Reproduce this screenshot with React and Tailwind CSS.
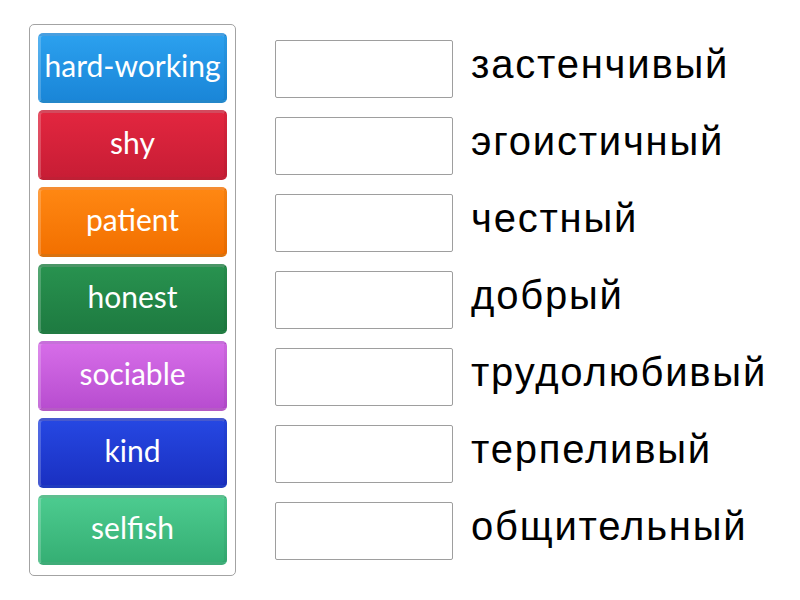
import React from 'react';

const tiles = [
  { label: 'hard-working', bg: 'bg-gradient-to-b from-[#2ba0ee] to-[#1a86d8]' },
  { label: 'shy', bg: 'bg-gradient-to-b from-[#e2263f] to-[#c81d35]' },
  { label: 'patient', bg: 'bg-gradient-to-b from-[#ff8712] to-[#f27000]' },
  { label: 'honest', bg: 'bg-gradient-to-b from-[#28924f] to-[#1e7b41]' },
  { label: 'sociable', bg: 'bg-gradient-to-b from-[#d66de8] to-[#b84dd0]' },
  { label: 'kind', bg: 'bg-gradient-to-b from-[#2647e2] to-[#1a30c2]' },
  { label: 'selfish', bg: 'bg-gradient-to-b from-[#4ccb8f] to-[#35af74]' },
];

const words = [
  'застенчивый',
  'эгоистичный',
  'честный',
  'добрый',
  'трудолюбивый',
  'терпеливый',
  'общительный',
];

const Tile = ({ label, bg }) => (
  <div
    className={`${bg} h-[70px] w-[189px] rounded-[5px] border-[3px] border-white/20 border-b-black/15 border-r-black/5 flex items-center justify-center text-white text-[30px] font-['Lato',sans-serif] leading-none pb-[7px] whitespace-nowrap`}
  >
    {label}
  </div>
);

export default function App() {
  return (
    <div className="w-[800px] h-[600px] bg-white flex items-start font-['Liberation_Sans',sans-serif]">
      <div className="ml-[29px] mt-[24px] w-[207px] h-[552px] border border-[#a3a3a3] rounded-[5px] p-[8px] flex flex-col gap-[7px]">
        {tiles.map((t) => (
          <Tile key={t.label} {...t} />
        ))}
      </div>
      <div className="ml-[39px] mt-[30px] flex flex-col">
        {words.map((w) => (
          <div key={w} className="h-[77px] flex items-center">
            <div className="w-[178px] h-[58px] border border-[#9e9e9e] rounded-[2px] bg-white" />
            <span className="ml-[18px] text-[40px] tracking-[1.8px] text-black leading-none pb-[9px] whitespace-nowrap">{w}</span>
          </div>
        ))}
      </div>
    </div>
  );
}
